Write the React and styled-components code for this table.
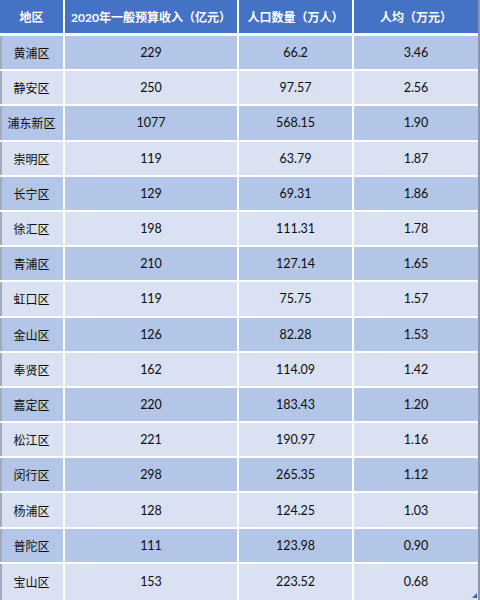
import React from 'react';
import styled, {createGlobalStyle} from 'styled-components';

const GlobalStyle = createGlobalStyle`
  html, body {
    margin: 0;
    padding: 0;
    background: #ffffff;
  }
`

const rows = [
    ['黄浦区', '229', '66.2', '3.46'],
    ['静安区', '250', '97.57', '2.56'],
    ['浦东新区', '1077', '568.15', '1.90'],
    ['崇明区', '119', '63.79', '1.87'],
    ['长宁区', '129', '69.31', '1.86'],
    ['徐汇区', '198', '111.31', '1.78'],
    ['青浦区', '210', '127.14', '1.65'],
    ['虹口区', '119', '75.75', '1.57'],
    ['金山区', '126', '82.28', '1.53'],
    ['奉贤区', '162', '114.09', '1.42'],
    ['嘉定区', '220', '183.43', '1.20'],
    ['松江区', '221', '190.97', '1.16'],
    ['闵行区', '298', '265.35', '1.12'],
    ['杨浦区', '128', '124.25', '1.03'],
    ['普陀区', '111', '123.98', '0.90'],
    ['宝山区', '153', '223.52', '0.68'],
]

const headers = ['地区', '2020年一般预算收入（亿元）', '人口数量（万人）', '人均（万元）']

const Table = styled.div`
  position: relative;
  display: grid;
  grid-template-columns: 63px 172px 113px 124px;
  grid-template-rows: 34px repeat(15, 33.2px) 1fr;
  column-gap: 2px;
  row-gap: 2px;
  width: 478px;
  height: 600px;
  background: #ffffff;
  border-right: 2px solid #8d96a6;
  font-family: "Lato", "Noto Sans CJK SC", sans-serif;
  font-size: 12px;
  color: #0d0d0d;
`

const HeadCell = styled.div`
  display: flex;
  align-items: center;
  justify-content: center;
  background: #4472c4;
  color: #ffffff;
  font-weight: 700;
  border-bottom: 1px solid #ffffff;
  white-space: nowrap;
`

const Cell = styled.div`
  display: flex;
  align-items: center;
  justify-content: center;
  background: ${p => (p.$dark ? '#b4c6e7' : '#d9e1f2')};
  box-shadow: ${p => (p.$edge ? 'inset 2px 0 0 #a3abba' : 'none')};
  font-size: ${p => (p.$edge ? '12px' : '12.5px')};
  white-space: nowrap;
`

const Handle = styled.div`
  position: absolute;
  right: 1px;
  bottom: 2px;
  width: 0;
  height: 0;
  border-left: 5px solid transparent;
  border-bottom: 5px solid #3f5fa8;
`

const App = () => {
    return (
        <>
            <GlobalStyle/>
            <Table>
                {headers.map(h => <HeadCell key={h}>{h}</HeadCell>)}
                {rows.map((row, i) => row.map((value, j) => (
                    <Cell key={i + '-' + j} $dark={i % 2 === 0} $edge={j === 0}>{value}</Cell>
                )))}
                <Handle/>
            </Table>
        </>
    );
};

export default App;
